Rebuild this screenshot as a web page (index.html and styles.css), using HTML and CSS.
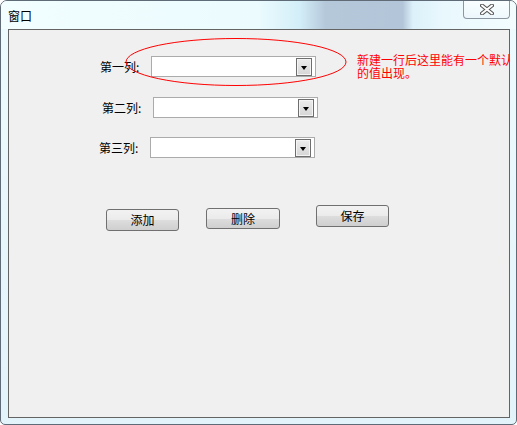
FILE: index.html
```html
<!DOCTYPE html>
<html lang="zh-CN">
<head>
<meta charset="UTF-8">
<title>窗口</title>
<link rel="stylesheet" href="styles.css">
</head>
<body>

<div class="window">
    <div class="titlebar">
        <span class="title">窗口</span>
        <div class="close-btn">
            <svg width="14" height="11" viewBox="0 0 14 11">
                <path d="M2 1.5 L12 9.5 M12 1.5 L2 9.5" stroke="#555" stroke-width="4" stroke-linecap="round"/>
                <path d="M2 1.5 L12 9.5 M12 1.5 L2 9.5" stroke="#fff" stroke-width="2" stroke-linecap="round"/>
            </svg>
        </div>
    </div>
    <div class="client">
        <svg class="mark" width="224" height="50" viewBox="0 0 224 50">
            <ellipse cx="111" cy="24" rx="110" ry="23.5" fill="none" stroke="#ff0000" stroke-width="1"/>
        </svg>
        <div class="note">新建一行后这里能有一个默认<br>的值出现。</div>

        <div class="field row1">
            <label>第一列:</label>
            <div class="combo"><span class="combo-btn"></span></div>
        </div>
        <div class="field row2">
            <label>第二列:</label>
            <div class="combo"><span class="combo-btn"></span></div>
        </div>
        <div class="field row3">
            <label>第三列:</label>
            <div class="combo"><span class="combo-btn"></span></div>
        </div>

        <div class="buttons">
            <button class="btn btn-add">添加</button>
            <button class="btn btn-del">删除</button>
            <button class="btn btn-save">保存</button>
        </div>
    </div>
</div>

</body>
</html>
```

FILE: styles.css
```css
body {
    margin: 0;
    padding: 0;
    background-color: #ffffff;
    font-family: "Noto Sans CJK SC", "Noto Sans", sans-serif;
    font-size: 12px;
}

.window {
    width: 517px;
    height: 425px;
    box-sizing: border-box;
    border: 1px solid #5f6b77;
    border-radius: 7px 7px 5px 5px;
    background: linear-gradient(to bottom, #eefbfe, #e3f3fa);
    display: flex;
    flex-direction: column;
    overflow: hidden;
}

.titlebar {
    height: 28px;
    display: flex;
    justify-content: space-between;
    align-items: flex-start;
    background: linear-gradient(to right, #f2feff 0%, #ebfbfe 50%, #d3eef8 58%, #b5c8da 63%, #b3c6d9 78%, #dcf1fa 80%, #e9f8fd 86%, #f3fdff 100%);
}

.title {
    padding: 7px 0 0 7px;
    line-height: 16px;
    color: #000;
}

.close-btn {
    width: 45px;
    height: 18px;
    margin: -1px 6px 0 0;
    border: 1px solid #8c96a0;
    border-top: none;
    border-radius: 0 0 4px 4px;
    background: linear-gradient(to bottom, rgba(255, 255, 255, 0.7), rgba(235, 245, 250, 0.5));
    display: flex;
    align-items: center;
    justify-content: center;
}

.client {
    position: relative;
    flex: 1;
    margin: 0 6px 6px 7px;
    border: 1px solid #646464;
    background-color: #f0f0f0;
    padding-top: 26px;
    overflow: hidden;
}

.mark {
    position: absolute;
    left: 116px;
    top: 8px;
    z-index: 2;
}

.note {
    position: absolute;
    left: 348px;
    top: 23px;
    color: #ff0000;
    line-height: 13px;
    white-space: nowrap;
}

.field {
    display: flex;
    align-items: center;
    height: 21px;
}

.field label {
    width: 51px;
    color: #000;
}

.row1 {
    margin-left: 91px;
}

.row2 {
    margin-left: 93px;
    margin-top: 20px;
}

.row3 {
    margin-left: 90px;
    margin-top: 19px;
}

.combo {
    width: 165px;
    height: 21px;
    box-sizing: border-box;
    border: 1px solid #ababab;
    background-color: #fff;
    display: flex;
    justify-content: flex-end;
    align-items: center;
    padding-right: 3px;
}

.combo-btn {
    width: 16px;
    height: 18px;
    box-sizing: border-box;
    border: 1px solid #6e6e6e;
    box-shadow: inset 0 0 0 1px #f4f4f4;
    background: linear-gradient(to bottom, #ececec, #d6d6d6);
    display: flex;
    justify-content: center;
    align-items: flex-end;
    padding-bottom: 5px;
}

.combo-btn::after {
    content: "";
    border-left: 3.5px solid transparent;
    border-right: 3.5px solid transparent;
    border-top: 4px solid #000;
}

.buttons {
    display: flex;
    align-items: flex-start;
    margin-top: 47px;
    margin-left: 97px;
}

.btn {
    width: 73px;
    height: 21px;
    padding: 0;
    border: 1px solid #707070;
    border-radius: 3px;
    background: linear-gradient(to bottom, #f2f2f2 0%, #ebebeb 50%, #dddddd 51%, #cfcfcf 100%);
    font-family: "Noto Sans CJK SC", "Noto Sans", sans-serif;
    font-size: 12px;
    color: #000;
    line-height: 18px;
}

.btn-add {
    margin-top: 4px;
    height: 22px;
}

.btn-del {
    margin-top: 3px;
    margin-left: 27px;
    width: 74px;
}

.btn-save {
    margin-left: 36px;
    height: 22px;
}
```
